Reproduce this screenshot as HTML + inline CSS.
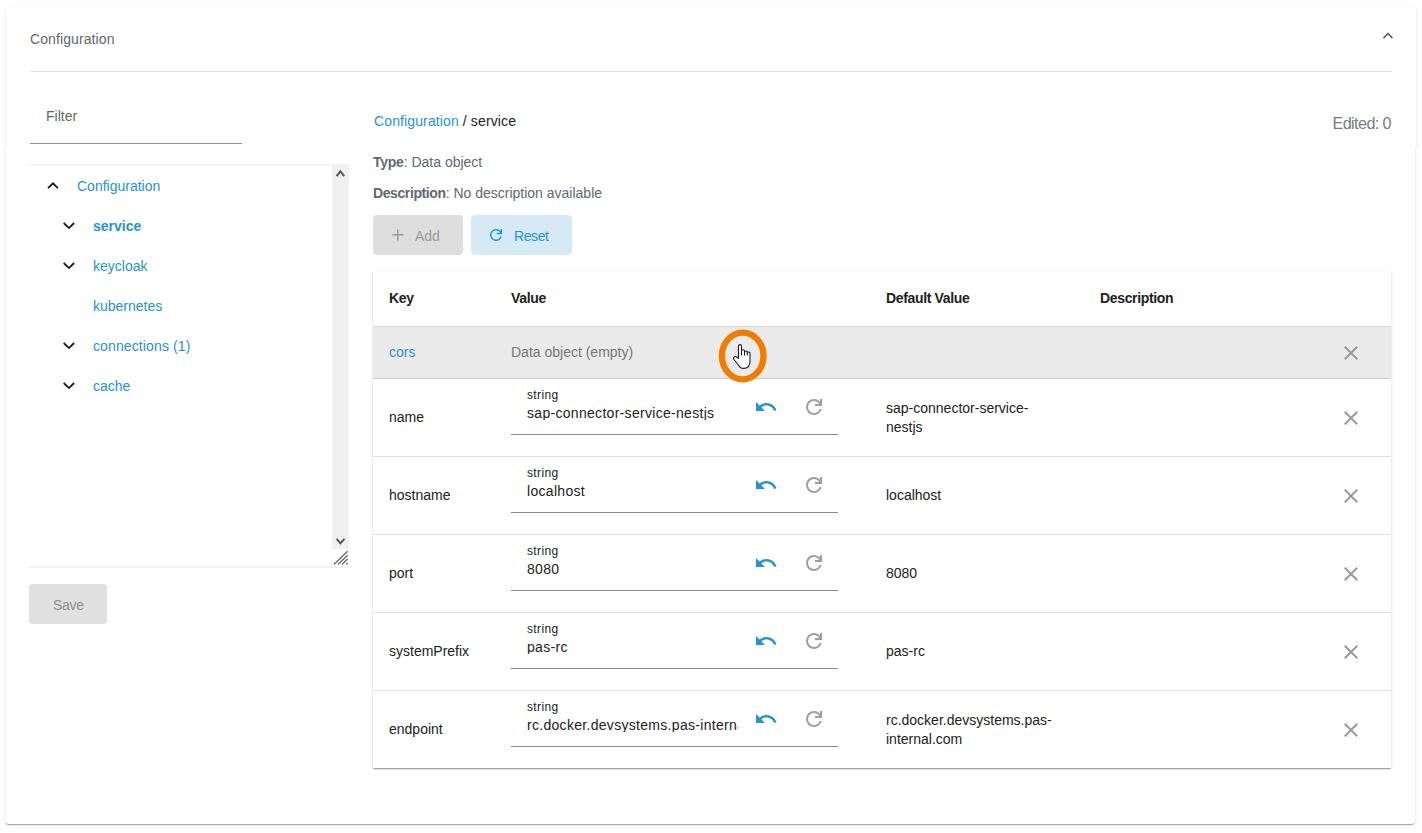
<!DOCTYPE html>
<html><head><meta charset="utf-8">
<style>
*{box-sizing:border-box;margin:0;padding:0}
html,body{width:1422px;height:833px;overflow:hidden;background:#fff;font-family:"Liberation Sans",sans-serif;font-size:14px;color:#212121}
.abs{position:absolute}
.card{position:absolute;left:6px;top:7px;width:1409px;height:817px;background:#fff;border-radius:4px;box-shadow:0 2px 1px -1px rgba(0,0,0,.2),0 1px 1px 0 rgba(0,0,0,.14),0 1px 3px 0 rgba(0,0,0,.12)}
.t{position:absolute;white-space:nowrap;line-height:1}
.blue{color:#2593d3}
.hdr{left:30px;top:32px;color:#5f6670;font-size:14px;letter-spacing:0.1px}
.divider{position:absolute;left:30px;top:71px;width:1362px;height:1px;background:#e0e0e0}
.row{position:absolute;left:373px;width:1018px;border-top:1px solid #e0e0e0}
.x{position:absolute}
</style></head><body>
<div class="card" style="left:5px;width:1410px;border-radius:0 0 4px 4px;clip-path:inset(141px -20px -20px -20px)"></div>
<div class="card" style="left:6px;width:1410px;height:141px;border-radius:4px 4px 0 0;clip-path:inset(-20px -20px 0 -20px)"></div>
<div class="t hdr">Configuration</div>
<svg class="abs" style="left:1380px;top:30px" width="16" height="12" viewBox="0 0 16 12"><path d="M3.5 8.1 L8 3.5 L12.4 8.1" fill="none" stroke="#636363" stroke-width="1.7"/></svg>
<div class="divider"></div>

<!-- left panel -->
<div class="t" style="left:46px;top:109px;color:#666;font-size:14px">Filter</div>
<div class="abs" style="left:30px;top:143px;width:212px;height:1px;background:#929292"></div>

<div class="abs" style="left:29px;top:164px;width:320px;height:404px;border-top:2px solid #f2f2f2;border-bottom:2px solid #f2f2f2"></div>
<div class="abs" style="left:332px;top:166px;width:17px;height:383px;background:#f0f0f0"></div>
<svg class="abs" style="left:332px;top:164px" width="17" height="17" viewBox="0 0 17 17"><path d="M4.6 12.2 L8.4 7.3 L12.3 12.2" fill="none" stroke="#555" stroke-width="2"/></svg>
<svg class="abs" style="left:332px;top:532px" width="17" height="17" viewBox="0 0 17 17"><path d="M4.6 6.9 L8.4 11.3 L12.5 6.9" fill="none" stroke="#555" stroke-width="2"/></svg>
<svg class="abs" style="left:332px;top:548px" width="17" height="18" viewBox="0 0 17 18"><path d="M1.9 16.4 L15.6 3.2 M6 16.4 L15.6 7.2 M10.1 16.4 L15.6 11.1 M14.2 16.4 L15.6 14.9" stroke="#6a6a6a" stroke-width="1.4"/></svg>

<svg class="abs" style="left:45px;top:180px" width="16" height="12" viewBox="0 0 16 12"><path d="M3 8.2 L8 3.3 L12.8 8.2" fill="none" stroke="#1a1a1a" stroke-width="1.8"/></svg>
<div class="t blue" style="left:77px;top:179px">Configuration</div>

<svg class="abs" style="left:61px;top:220px" width="16" height="12" viewBox="0 0 16 12"><path d="M2.7 3 L8 8.1 L13.1 3" fill="none" stroke="#1a1a1a" stroke-width="1.8"/></svg>
<div class="t blue" style="left:93px;top:219px;font-weight:bold">service</div>
<svg class="abs" style="left:61px;top:260px" width="16" height="12" viewBox="0 0 16 12"><path d="M2.7 3 L8 8.1 L13.1 3" fill="none" stroke="#1a1a1a" stroke-width="1.8"/></svg>
<div class="t blue" style="left:93px;top:259px">keycloak</div>
<div class="t blue" style="left:93px;top:299px">kubernetes</div>
<svg class="abs" style="left:61px;top:340px" width="16" height="12" viewBox="0 0 16 12"><path d="M2.7 3 L8 8.1 L13.1 3" fill="none" stroke="#1a1a1a" stroke-width="1.8"/></svg>
<div class="t blue" style="left:93px;top:339px;letter-spacing:0.12px">connections (1)</div>
<svg class="abs" style="left:61px;top:380px" width="16" height="12" viewBox="0 0 16 12"><path d="M2.7 3 L8 8.1 L13.1 3" fill="none" stroke="#1a1a1a" stroke-width="1.8"/></svg>
<div class="t blue" style="left:93px;top:379px">cache</div>

<div class="abs" style="left:29px;top:584px;width:78px;height:40px;background:#e0e0e0;border-radius:4px"></div>
<div class="t" style="left:53px;top:598px;color:#8f8f8f;letter-spacing:-0.3px">Save</div>

<!-- right panel -->
<div class="t" style="left:374px;top:114px;letter-spacing:0.12px"><span class="blue">Configuration</span> / service</div>
<div class="t" style="right:31px;top:115px;color:#757c85;font-size:16.2px;letter-spacing:-0.6px">Edited: 0</div>
<div class="t" style="left:373px;top:155px;color:#616872"><b style="letter-spacing:-0.25px">Type</b>: Data object</div>
<div class="t" style="left:373px;top:186px;color:#616872"><b style="letter-spacing:-0.4px">Description</b>: No description available</div>

<div class="abs" style="left:373px;top:215px;width:90px;height:40px;background:#dedede;border-radius:4px"></div>
<svg class="abs" style="left:392px;top:229px" width="12" height="12" viewBox="0 0 12 12"><path d="M5.75 0.5 V11.5 M0.5 5.75 H11.5" stroke="#999" stroke-width="1.5"/></svg>
<div class="t" style="left:415px;top:229px;color:#999">Add</div>
<div class="abs" style="left:471px;top:215px;width:101px;height:40px;background:#d6eaf6;border-radius:4px"></div>
<svg class="abs" style="left:487px;top:226px" width="18" height="18" viewBox="0 -960 960 960"><path d="M480-160q-134 0-227-93t-93-227q0-134 93-227t227-93q69 0 132 28.5T720-690v-110h80v280H520v-80h168q-32-56-87.5-88T480-720q-100 0-170 70t-70 170q0 100 70 170t170 70q77 0 139-44t87-116h84q-28 106-114 173t-196 67Z" fill="#2593d3"/></svg>
<div class="t blue" style="left:514px;top:229px;letter-spacing:-0.4px">Reset</div>

<div class="abs" style="left:373px;top:271px;width:1018px;height:497px;background:#fff;box-shadow:0 2px 1px -1px rgba(0,0,0,.2),0 1px 1px 0 rgba(0,0,0,.14),0 1px 3px 0 rgba(0,0,0,.12)"></div>
<div class="t" style="left:389px;top:291px;font-weight:bold;letter-spacing:-0.35px">Key</div>
<div class="t" style="left:511px;top:291px;font-weight:bold;letter-spacing:-0.35px">Value</div>
<div class="t" style="left:886px;top:291px;font-weight:bold;letter-spacing:-0.35px">Default Value</div>
<div class="t" style="left:1100px;top:291px;font-weight:bold;letter-spacing:-0.35px">Description</div>

<div class="abs" style="left:373px;top:326px;width:1018px;height:53px;background:#eaeaea;border-top:1px solid #dcdcdc;border-bottom:1px solid #cccccc"></div>
<div class="t blue" style="left:389px;top:345px">cors</div>
<div class="t" style="left:511px;top:345px;color:#777">Data object (empty)</div>


<div class="t" style="left:389px;top:410px">name</div>
<div class="t" style="left:527px;top:389px;font-size:12px;letter-spacing:0.35px">string</div>
<div class="t" style="left:527px;top:406px;width:211px;overflow:hidden;letter-spacing:0.3px">sap-connector-service-nestjs</div>
<div class="abs" style="left:511px;top:434px;width:327px;height:1px;background:#8a8a8a"></div>
<svg class="abs" style="left:754px;top:395px" width="24" height="24" viewBox="0 0 24 24"><path d="M12.5 8c-2.65 0-5.05.99-6.9 2.6L2 7v9h9l-3.62-3.62c1.39-1.16 3.16-1.88 5.12-1.88 3.54 0 6.55 2.31 7.6 5.5l2.37-.78C21.08 11.03 17.15 8 12.5 8z" fill="#2593d3"/></svg>
<svg class="abs" style="left:802px;top:395px" width="24" height="24" viewBox="0 -960 960 960"><path d="M480-160q-134 0-227-93t-93-227q0-134 93-227t227-93q69 0 132 28.5T720-690v-110h80v280H520v-80h168q-32-56-87.5-88T480-720q-100 0-170 70t-70 170q0 100 70 170t170 70q77 0 139-44t87-116h84q-28 106-114 173t-196 67Z" fill="#9e9e9e"/></svg>
<div class="t" style="left:886px;top:400px;line-height:19px;top:399px">sap-connector-service-<br>nestjs</div>
<svg class="abs" style="left:1339px;top:406px" width="24" height="24" viewBox="0 0 24 24"><path d="M19 6.41L17.59 5 12 10.59 6.41 5 5 6.41 10.59 12 5 17.59 6.41 19 12 13.41 17.59 19 19 17.59 13.41 12z" fill="#9a9a9a"/></svg>
<div class="abs" style="left:373px;top:456px;width:1018px;height:1px;background:#e0e0e0"></div>
<div class="t" style="left:389px;top:488px">hostname</div>
<div class="t" style="left:527px;top:467px;font-size:12px;letter-spacing:0.35px">string</div>
<div class="t" style="left:527px;top:484px;width:211px;overflow:hidden;letter-spacing:0.3px">localhost</div>
<div class="abs" style="left:511px;top:512px;width:327px;height:1px;background:#8a8a8a"></div>
<svg class="abs" style="left:754px;top:473px" width="24" height="24" viewBox="0 0 24 24"><path d="M12.5 8c-2.65 0-5.05.99-6.9 2.6L2 7v9h9l-3.62-3.62c1.39-1.16 3.16-1.88 5.12-1.88 3.54 0 6.55 2.31 7.6 5.5l2.37-.78C21.08 11.03 17.15 8 12.5 8z" fill="#2593d3"/></svg>
<svg class="abs" style="left:802px;top:473px" width="24" height="24" viewBox="0 -960 960 960"><path d="M480-160q-134 0-227-93t-93-227q0-134 93-227t227-93q69 0 132 28.5T720-690v-110h80v280H520v-80h168q-32-56-87.5-88T480-720q-100 0-170 70t-70 170q0 100 70 170t170 70q77 0 139-44t87-116h84q-28 106-114 173t-196 67Z" fill="#9e9e9e"/></svg>
<div class="t" style="left:886px;top:488px">localhost</div>
<svg class="abs" style="left:1339px;top:484px" width="24" height="24" viewBox="0 0 24 24"><path d="M19 6.41L17.59 5 12 10.59 6.41 5 5 6.41 10.59 12 5 17.59 6.41 19 12 13.41 17.59 19 19 17.59 13.41 12z" fill="#9a9a9a"/></svg>
<div class="abs" style="left:373px;top:534px;width:1018px;height:1px;background:#e0e0e0"></div>
<div class="t" style="left:389px;top:566px">port</div>
<div class="t" style="left:527px;top:545px;font-size:12px;letter-spacing:0.35px">string</div>
<div class="t" style="left:527px;top:562px;width:211px;overflow:hidden;letter-spacing:0.3px">8080</div>
<div class="abs" style="left:511px;top:590px;width:327px;height:1px;background:#8a8a8a"></div>
<svg class="abs" style="left:754px;top:551px" width="24" height="24" viewBox="0 0 24 24"><path d="M12.5 8c-2.65 0-5.05.99-6.9 2.6L2 7v9h9l-3.62-3.62c1.39-1.16 3.16-1.88 5.12-1.88 3.54 0 6.55 2.31 7.6 5.5l2.37-.78C21.08 11.03 17.15 8 12.5 8z" fill="#2593d3"/></svg>
<svg class="abs" style="left:802px;top:551px" width="24" height="24" viewBox="0 -960 960 960"><path d="M480-160q-134 0-227-93t-93-227q0-134 93-227t227-93q69 0 132 28.5T720-690v-110h80v280H520v-80h168q-32-56-87.5-88T480-720q-100 0-170 70t-70 170q0 100 70 170t170 70q77 0 139-44t87-116h84q-28 106-114 173t-196 67Z" fill="#9e9e9e"/></svg>
<div class="t" style="left:886px;top:566px">8080</div>
<svg class="abs" style="left:1339px;top:562px" width="24" height="24" viewBox="0 0 24 24"><path d="M19 6.41L17.59 5 12 10.59 6.41 5 5 6.41 10.59 12 5 17.59 6.41 19 12 13.41 17.59 19 19 17.59 13.41 12z" fill="#9a9a9a"/></svg>
<div class="abs" style="left:373px;top:612px;width:1018px;height:1px;background:#e0e0e0"></div>
<div class="t" style="left:389px;top:644px">systemPrefix</div>
<div class="t" style="left:527px;top:623px;font-size:12px;letter-spacing:0.35px">string</div>
<div class="t" style="left:527px;top:640px;width:211px;overflow:hidden;letter-spacing:0.3px">pas-rc</div>
<div class="abs" style="left:511px;top:668px;width:327px;height:1px;background:#8a8a8a"></div>
<svg class="abs" style="left:754px;top:629px" width="24" height="24" viewBox="0 0 24 24"><path d="M12.5 8c-2.65 0-5.05.99-6.9 2.6L2 7v9h9l-3.62-3.62c1.39-1.16 3.16-1.88 5.12-1.88 3.54 0 6.55 2.31 7.6 5.5l2.37-.78C21.08 11.03 17.15 8 12.5 8z" fill="#2593d3"/></svg>
<svg class="abs" style="left:802px;top:629px" width="24" height="24" viewBox="0 -960 960 960"><path d="M480-160q-134 0-227-93t-93-227q0-134 93-227t227-93q69 0 132 28.5T720-690v-110h80v280H520v-80h168q-32-56-87.5-88T480-720q-100 0-170 70t-70 170q0 100 70 170t170 70q77 0 139-44t87-116h84q-28 106-114 173t-196 67Z" fill="#9e9e9e"/></svg>
<div class="t" style="left:886px;top:644px">pas-rc</div>
<svg class="abs" style="left:1339px;top:640px" width="24" height="24" viewBox="0 0 24 24"><path d="M19 6.41L17.59 5 12 10.59 6.41 5 5 6.41 10.59 12 5 17.59 6.41 19 12 13.41 17.59 19 19 17.59 13.41 12z" fill="#9a9a9a"/></svg>
<div class="abs" style="left:373px;top:690px;width:1018px;height:1px;background:#e0e0e0"></div>
<div class="t" style="left:389px;top:722px">endpoint</div>
<div class="t" style="left:527px;top:701px;font-size:12px;letter-spacing:0.35px">string</div>
<div class="t" style="left:527px;top:718px;width:211px;overflow:hidden;letter-spacing:0.3px">rc.docker.devsystems.pas-internal.com</div>
<div class="abs" style="left:511px;top:746px;width:327px;height:1px;background:#8a8a8a"></div>
<svg class="abs" style="left:754px;top:707px" width="24" height="24" viewBox="0 0 24 24"><path d="M12.5 8c-2.65 0-5.05.99-6.9 2.6L2 7v9h9l-3.62-3.62c1.39-1.16 3.16-1.88 5.12-1.88 3.54 0 6.55 2.31 7.6 5.5l2.37-.78C21.08 11.03 17.15 8 12.5 8z" fill="#2593d3"/></svg>
<svg class="abs" style="left:802px;top:707px" width="24" height="24" viewBox="0 -960 960 960"><path d="M480-160q-134 0-227-93t-93-227q0-134 93-227t227-93q69 0 132 28.5T720-690v-110h80v280H520v-80h168q-32-56-87.5-88T480-720q-100 0-170 70t-70 170q0 100 70 170t170 70q77 0 139-44t87-116h84q-28 106-114 173t-196 67Z" fill="#9e9e9e"/></svg>
<div class="t" style="left:886px;top:712px;line-height:19px;top:711px">rc.docker.devsystems.pas-<br>internal.com</div>
<svg class="abs" style="left:1339px;top:718px" width="24" height="24" viewBox="0 0 24 24"><path d="M19 6.41L17.59 5 12 10.59 6.41 5 5 6.41 10.59 12 5 17.59 6.41 19 12 13.41 17.59 19 19 17.59 13.41 12z" fill="#9a9a9a"/></svg>
<svg class="abs" style="left:1339px;top:341px" width="24" height="24" viewBox="0 0 24 24"><path d="M19 6.41L17.59 5 12 10.59 6.41 5 5 6.41 10.59 12 5 17.59 6.41 19 12 13.41 17.59 19 19 17.59 13.41 12z" fill="#9a9a9a"/></svg>
<svg class="abs" style="left:712px;top:324px" width="60" height="64" viewBox="0 0 60 64"><ellipse cx="30.7" cy="32" rx="20.8" ry="23.3" fill="none" stroke="#ef7d00" stroke-width="6.3"/></svg>
<svg class="abs" style="left:733px;top:344px" width="20" height="26" viewBox="0 0 20 26"><path d="M5.5 13.5 L5.5 2.5 Q5.5 0.6 7 0.6 Q8.5 0.6 8.5 2.5 L8.5 7 Q8.5 5.8 10 5.8 Q11.5 5.8 11.5 7.2 L11.5 8 Q11.5 7 13 7 Q14.3 7 14.3 8.5 L14.3 9 Q14.5 8 15.8 8 Q17 8 17 9.5 L17 17 Q17 24.4 10.5 24.4 Q7 24.4 5 20.5 L1 15.5 Q0.2 14 1.2 13 Q2.5 12 4 13.2 L5.5 14.5 Z" fill="#fff" stroke="#1b1b2f" stroke-width="1.1" stroke-linejoin="round"/><path d="M8.5 7 V11.5 M11.5 8 V11.5 M14.3 9 V11.5" stroke="#1b1b2f" stroke-width="1"/></svg>
</body></html>
